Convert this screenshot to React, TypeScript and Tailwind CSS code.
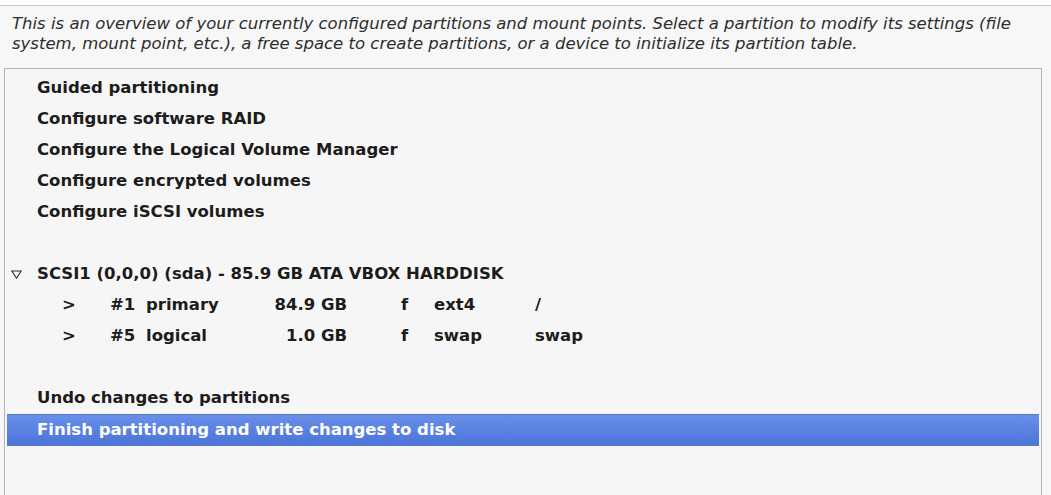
import React from "react";

const partitions = [
  { num: "#1", type: "primary", size: "84.9 GB", flag: "f", fs: "ext4", mount: "/" },
  { num: "#5", type: "logical", size: "1.0 GB", flag: "f", fs: "swap", mount: "swap" },
];

function Row({ children, selected }: { children?: React.ReactNode; selected?: boolean }) {
  return (
    <div
      className={
        selected
          ? "flex h-[32px] items-center border-y border-[#5b78c4] bg-gradient-to-b from-[#6a8fea] to-[#4b74d9] text-white"
          : "flex h-[31px] items-center text-[#1c1c1c]"
      }
    >
      {children}
    </div>
  );
}

export default function App() {
  return (
    <div className="h-[495px] w-[1051px] overflow-hidden bg-white font-['DejaVu_Sans',sans-serif]">
      <div className="mt-[5px] h-full border-t border-[#c4c4c4] bg-[#f6f7f6]">
        {/* description */}
        <p className="px-[12px] pt-[8px] text-[16.5px] italic leading-[20px] text-[#2e2e2e]">
          This is an overview of your currently configured partitions and mount points. Select a partition to modify its settings (file
          <br />
          system, mount point, etc.), a free space to create partitions, or a device to initialize its partition table.
        </p>

        {/* list box */}
        <div className="ml-[4px] mt-[14px] h-[440px] w-[1038px] border border-[#b4b4b4] bg-[#f6f6f6] px-[2px] pt-[4px] text-[16.5px] font-bold">
          <Row><span className="pl-[30px]">Guided partitioning</span></Row>
          <Row><span className="pl-[30px]">Configure software RAID</span></Row>
          <Row><span className="pl-[30px]">Configure the Logical Volume Manager</span></Row>
          <Row><span className="pl-[30px]">Configure encrypted volumes</span></Row>
          <Row><span className="pl-[30px]">Configure iSCSI volumes</span></Row>
          <Row />
          <Row>
            <svg className="ml-[4px] mr-[15px]" width="11" height="9" viewBox="0 0 11 9">
              <path d="M0.8 1 L10.2 1 L5.5 8.2 Z" fill="none" stroke="#2a2a2a" strokeWidth="1.1" />
            </svg>
            <span>SCSI1 (0,0,0) (sda) - 85.9 GB ATA VBOX HARDDISK</span>
          </Row>
          {partitions.map((p) => (
            <Row key={p.num}>
              <span className="ml-[55px] w-[48px]">&gt;</span>
              <span className="w-[36px]">{p.num}</span>
              <span className="w-[100px]">{p.type}</span>
              <span className="w-[101px] text-right">{p.size}</span>
              <span className="ml-[54px] w-[33px]">{p.flag}</span>
              <span className="w-[101px]">{p.fs}</span>
              <span>{p.mount}</span>
            </Row>
          ))}
          <Row />
          <Row><span className="pl-[30px]">Undo changes to partitions</span></Row>
          <Row selected><span className="pl-[30px]">Finish partitioning and write changes to disk</span></Row>
        </div>
      </div>
    </div>
  );
}
